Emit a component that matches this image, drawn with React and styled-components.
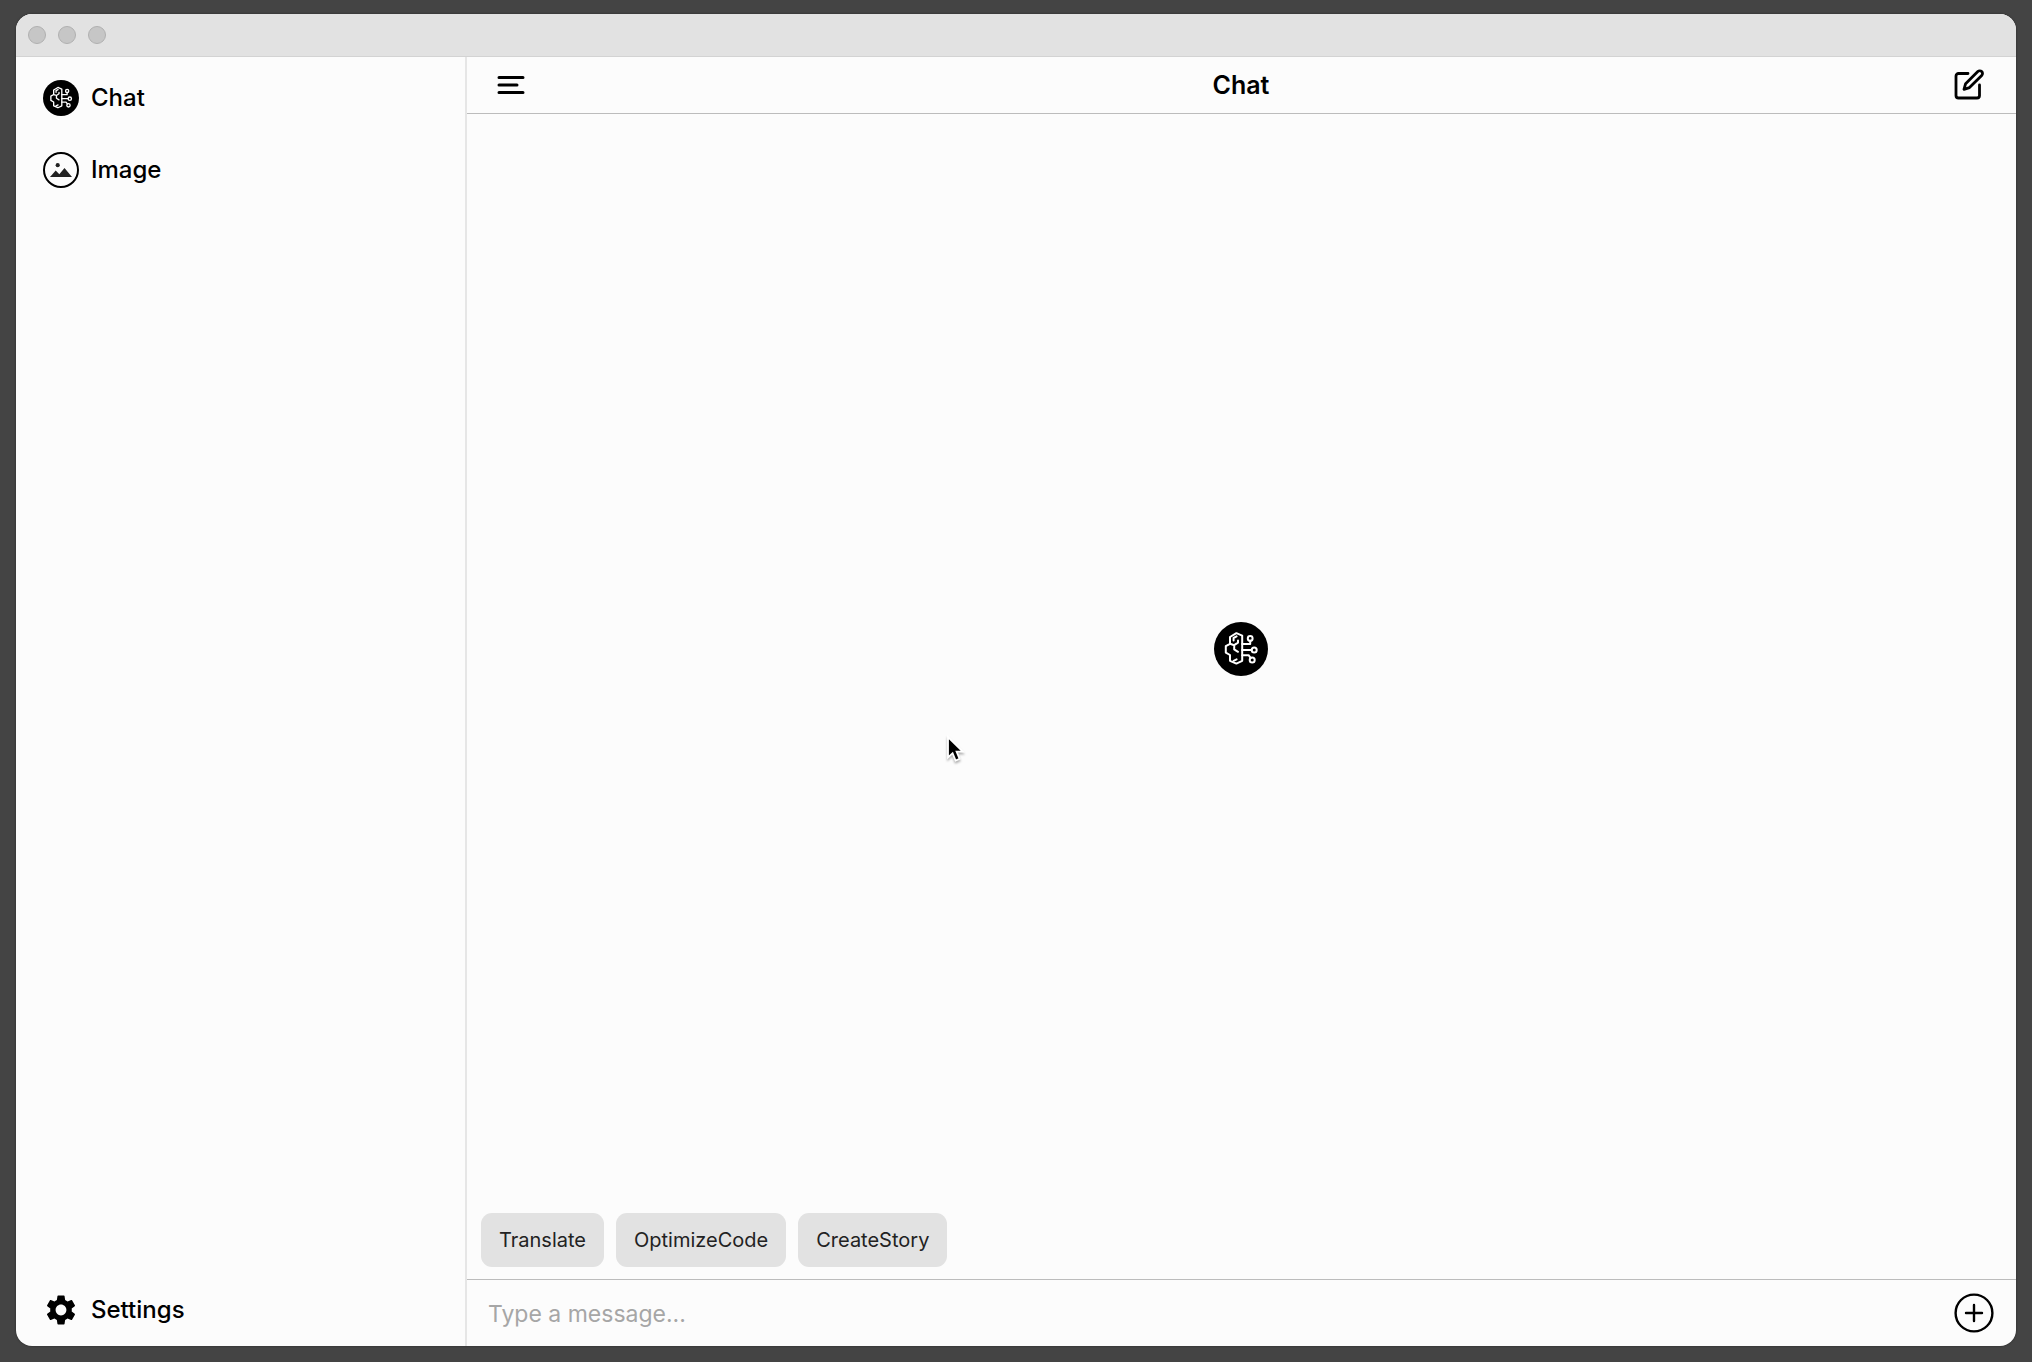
import React, { useState } from 'react';
import styled, { createGlobalStyle } from 'styled-components';
import { MdSettings } from 'react-icons/md';

const navItems = [
  { id: 'chat', label: 'Chat' },
  { id: 'image', label: 'Image' },
];

const suggestions = ['Translate', 'OptimizeCode', 'CreateStory'];

const BrainIcon = ({ size }) =>
  <svg width={size} height={size} viewBox="0 0 54 54" fill="none" aria-hidden="true">
    <circle cx="27" cy="27" r="27" fill="#000" />
    <g stroke="#fff" strokeWidth="2" strokeLinejoin="round" strokeLinecap="round">
      <path d="M28.2 13.6 22.4 11.2 16 15v6.8l-4.2 2.4v6.4L16 33v5.8l6.4 2.8 5.8-2.8Z" />
      <path d="M16 21.8l4.2 1.4 3.8-2.6v-2M20.2 23.2v4.2l3.8 2.4M22.6 14.4 19.6 16v2.4M19.6 38.8l3-1.4" />
      <path d="M28.2 22h8v-3.2M28.2 28h9.4M28.2 33.2h6.4l2 2.6" />
      <circle cx="36.2" cy="16.4" r="2.4" />
      <circle cx="40.2" cy="28" r="2.5" />
      <circle cx="38.2" cy="38" r="2.5" />
    </g>
  </svg>;

const ImageIcon = () =>
  <svg width="36" height="36" viewBox="0 0 36 36" aria-hidden="true">
    <circle cx="18" cy="18" r="17" fill="none" stroke="#000" strokeWidth="2" />
    <circle cx="14.7" cy="13.2" r="2.1" fill="#222" />
    <path d="M7 25 12.7 18.400l3.600 3.800 5.200-6.200L29 25Z" fill="#222" />
  </svg>;

const MenuIcon = () =>
  <svg width="28" height="20" viewBox="0 0 28 20" stroke="#000" strokeWidth="3" strokeLinecap="round" aria-hidden="true">
    <path d="M2 2.500h24M2 10h18M2 17.500h24" />
  </svg>;

const ComposeIcon = () =>
  <svg width="32" height="32" viewBox="0 0 32 32" fill="none" stroke="#000" strokeWidth="2.8" strokeLinecap="round" strokeLinejoin="round" aria-hidden="true">
    <path d="M15 4.5H5.500A2.500 2.500 0 0 0 3 7v19.500A2.500 2.500 0 0 0 5.500 29H24a2.500 2.500 0 0 0 2.500-2.500V16" />
    <path d="M11 20.300 12.600 14.700 24.800 2.600a2.700 2.700 0 0 1 3.900 3.900L16.500 18.600Z" />
  </svg>;

const PlusIcon = () =>
  <svg width="40" height="40" viewBox="0 0 40 40" fill="none" stroke="#000" strokeWidth="2.4" strokeLinecap="round" aria-hidden="true">
    <circle cx="20" cy="20" r="18.4" />
    <path d="M20 12v16M12 20h16" />
  </svg>;

const Cursor = () =>
  <CursorWrap width="24" height="30" viewBox="0 0 24 30" aria-hidden="true">
    <path d="M2 2v20.500l4.600-4.300 3 7.300 4-1.700-3-7.200h6.200Z" fill="#000" stroke="#fff" strokeWidth="1.8" />
  </CursorWrap>;

const App = () => {
  const [page, setPage] = useState('chat');
  const [message, setMessage] = useState('');

  return (
    <Desktop>
      <GlobalStyle />
      <Window>
        <TitleBar>
          <WindowDot aria-label="Close" />
          <WindowDot aria-label="Minimize" />
          <WindowDot aria-label="Zoom" />
        </TitleBar>
        <Body>
          <Sidebar>
            <Nav>
              {navItems.map(item =>
                <NavButton key={item.id} onClick={() => setPage(item.id)}>
                  <NavIcon>{item.id === 'chat' ? <BrainIcon size={36} /> : <ImageIcon />}</NavIcon>
                  {item.label}
                </NavButton>
              )}
            </Nav>
            <NavButton>
              <NavIcon><MdSettings size={36} /></NavIcon>
              Settings
            </NavButton>
          </Sidebar>
          <Main>
            <Header>
              <IconButton aria-label="Toggle sidebar"><MenuIcon /></IconButton>
              <Title>{page === 'chat' ? 'Chat' : 'Image'}</Title>
              <IconButton $end aria-label="New chat"><ComposeIcon /></IconButton>
            </Header>
            <Messages>
              <BrainIcon size={54} />
            </Messages>
            <Suggestions>
              {suggestions.map(text =>
                <Chip key={text} onClick={() => setMessage(text)}>{text}</Chip>
              )}
            </Suggestions>
            <Composer>
              <MessageInput
                aria-label="Message"
                placeholder="Type a message..."
                value={message}
                onChange={e => setMessage(e.target.value)}
              />
              <IconButton aria-label="Add attachment"><PlusIcon /></IconButton>
            </Composer>
          </Main>
        </Body>
      </Window>
      <Cursor />
    </Desktop>
  );
};

export default App;

const GlobalStyle = createGlobalStyle`
  * {
    box-sizing: border-box;
  }
  body {
    margin: 0;
    background: #444;
    color: #000;
    font-family: Inter, 'Liberation Sans', sans-serif;
  }
  button, input {
    padding: 0;
    border: 0;
    background: none;
    color: inherit;
    font-family: inherit;
  }
  svg {
    display: block;
  }
`;

const Desktop = styled.div`
  position: relative;
  display: flex;
  height: 100vh;
  padding: 14px 16px 16px;
  background: #444;
`;

const Window = styled.div`
  display: flex;
  flex: 1;
  flex-direction: column;
  overflow: hidden;
  border-radius: 16px;
  background: #fcfcfc;
  box-shadow: 0 0 2px #222;
`;

const TitleBar = styled.div`
  display: flex;
  align-items: center;
  gap: 12px;
  height: 43px;
  padding: 0 12px;
  border-bottom: 1px solid #d3d3d3;
  background: #e2e2e2;
`;

const WindowDot = styled.button`
  width: 18px;
  height: 18px;
  border: 1px solid #b0b0b0;
  border-radius: 50%;
  background: #c6c6c6;
`;

const Body = styled.div`
  display: flex;
  flex: 1;
  min-height: 0;
`;

const Sidebar = styled.aside`
  display: flex;
  flex-direction: column;
  justify-content: space-between;
  width: 451px;
  padding: 5px 27px 0;
  border-right: 2px solid #e6e6e6;
`;

const Nav = styled.nav`
  display: flex;
  flex-direction: column;
`;

const NavButton = styled.button`
  display: flex;
  align-items: center;
  gap: 12px;
  height: 72px;
  font-size: 24px;
  font-weight: 500;
  line-height: 32px;
`;

const NavIcon = styled.span`
  flex: none;
`;

const Main = styled.main`
  display: flex;
  flex: 1;
  flex-direction: column;
  min-width: 0;
`;

const Header = styled.header`
  display: grid;
  grid-template-columns: 1fr auto 1fr;
  align-items: center;
  height: 57px;
  padding: 0 31px 0 30px;
  border-bottom: 1px solid #bcbcbc;
`;

const Title = styled.h1`
  margin: 0;
  font-size: 25px;
  font-weight: 600;
  line-height: 32px;
`;

const IconButton = styled.button`
  justify-self: ${props => props.$end ? 'end' : 'start'};
`;

const Messages = styled.section`
  display: flex;
  flex: 1;
  align-items: center;
  justify-content: center;
  padding: 0 2px 18px 0;
`;

const Suggestions = styled.div`
  display: flex;
  gap: 12px;
  padding: 12px 14px;
`;

const Chip = styled.button`
  height: 54px;
  padding: 0 18px;
  border-radius: 11px;
  background: #e2e2e2;
  color: #222;
  font-size: 20px;
  line-height: 28px;
`;

const Composer = styled.div`
  display: flex;
  align-items: center;
  height: 67px;
  padding: 0 22px 0 21px;
  border-top: 1px solid #bcbcbc;
`;

const MessageInput = styled.input`
  flex: 1;
  min-width: 0;
  height: 48px;
  padding-top: 2px;
  outline: 0;
  font-size: 23px;
  &::placeholder {
    color: #a6a6a6;
  }
`;

const CursorWrap = styled.svg`
  position: absolute;
  top: 735px;
  left: 946px;
  filter: drop-shadow(0 2px 1px rgba(0, 0, 0, 0.3));
`;
